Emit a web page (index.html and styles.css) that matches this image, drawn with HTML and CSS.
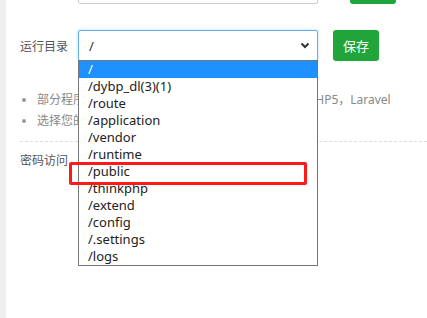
FILE: index.html
```html
<!DOCTYPE html>
<html lang="zh-CN">
<head>
    <meta charset="UTF-8">
    <title>网站设置 - 运行目录</title>
    <link rel="stylesheet" href="styles.css">
</head>
<body>
    <div class="page">
        <div class="sidebar"></div>
        <div class="content">
            <div class="row row-top">
                <span class="label"></span>
                <div class="input"></div>
                <span class="btn btn-top"></span>
            </div>

            <div class="row row-dir">
                <span class="label">运行目录</span>
                <div class="select-wrap">
                    <div class="select">
                        <span>/</span>
                        <svg class="chevron" width="10" height="7" viewBox="0 0 10 7">
                            <path d="M1.5 1.5 L5 5 L8.5 1.5" fill="none" stroke="#333" stroke-width="2"/>
                        </svg>
                    </div>
                    <ul class="options">
                        <li class="active">/</li>
                        <li>/dybp_dl(3)(1)</li>
                        <li>/route</li>
                        <li>/application</li>
                        <li>/vendor</li>
                        <li>/runtime</li>
                        <li>/public</li>
                        <li>/thinkphp</li>
                        <li>/extend</li>
                        <li>/config</li>
                        <li>/.settings</li>
                        <li>/logs</li>
                    </ul>
                </div>
                <button class="btn">保存</button>
            </div>

            <ul class="tips">
                <li>部分程序需要指定二级目录作为运行目录，如ThinkPHP5，Laravel</li>
                <li>选择您的运行目录，点保存即可</li>
            </ul>

            <div class="row row-pass">
                <span class="label">密码访问</span>
            </div>

            <div class="mark"></div>
        </div>
    </div>
</body>
</html>
```

FILE: styles.css
```css
body {
    margin: 0;
    background: #fff;
    font-family: "Noto Sans", "Noto Sans CJK SC", sans-serif;
    color: #555;
    overflow: hidden;
}
.page {
    display: flex;
    height: 318px;
}
.sidebar {
    width: 6px;
    background-color: #efefef;
}
.content {
    position: relative;
    flex: 1;
    padding-left: 14px;
}
.row {
    display: flex;
    align-items: center;
}
.label {
    width: 58px;
    font-size: 12px;
    color: #555;
    white-space: nowrap;
}
.row-top {
    margin-top: -26px;
    height: 30px;
}
.input {
    width: 238px;
    height: 28px;
    border: 1px solid #ccc;
    border-radius: 2px;
}
.btn {
    margin-left: 15px;
    width: 46px;
    height: 31px;
    border: none;
    border-radius: 3px;
    background-color: #20a53a;
    color: #fff;
    font-family: "Noto Sans CJK SC", sans-serif;
    font-size: 13px;
    padding: 0;
}
.btn-top {
    margin-left: 32px;
    height: 30px;
}
.row-dir {
    margin-top: 26px;
    height: 31px;
}
.select-wrap {
    position: relative;
}
.select {
    display: flex;
    align-items: center;
    justify-content: space-between;
    box-sizing: border-box;
    width: 240px;
    height: 31px;
    padding: 0 7px 0 10px;
    border: 1px solid #66afe9;
    border-radius: 2px;
    box-shadow: 0 0 3px rgba(102, 175, 233, 0.5);
    font-size: 13px;
    color: #333;
}
.options {
    position: absolute;
    top: 30px;
    left: 0;
    z-index: 2;
    box-sizing: border-box;
    width: 240px;
    margin: 0;
    padding: 0;
    list-style: none;
    background: #fff;
    border: 1px solid #767676;
    font-size: 13px;
    color: #222;
}
.options li {
    height: 17px;
    line-height: 17px;
    padding-left: 9px;
}
.options li.active {
    background-color: #1e90ff;
    color: #fff;
}
.tips {
    margin: 28px 0 0;
    padding: 0 0 10px 17px;
    font-size: 12px;
    color: #888;
    border-bottom: 1px dashed #ddd;
}
.tips li {
    height: 21px;
    line-height: 21px;
    white-space: nowrap;
}
.tips li::marker {
    color: #999;
}
.row-pass {
    margin-top: 9px;
}
.mark {
    position: absolute;
    left: 63px;
    top: 162px;
    width: 232px;
    height: 17px;
    border: 3px solid #ff1a1a;
    border-radius: 2px;
    z-index: 3;
}
```
